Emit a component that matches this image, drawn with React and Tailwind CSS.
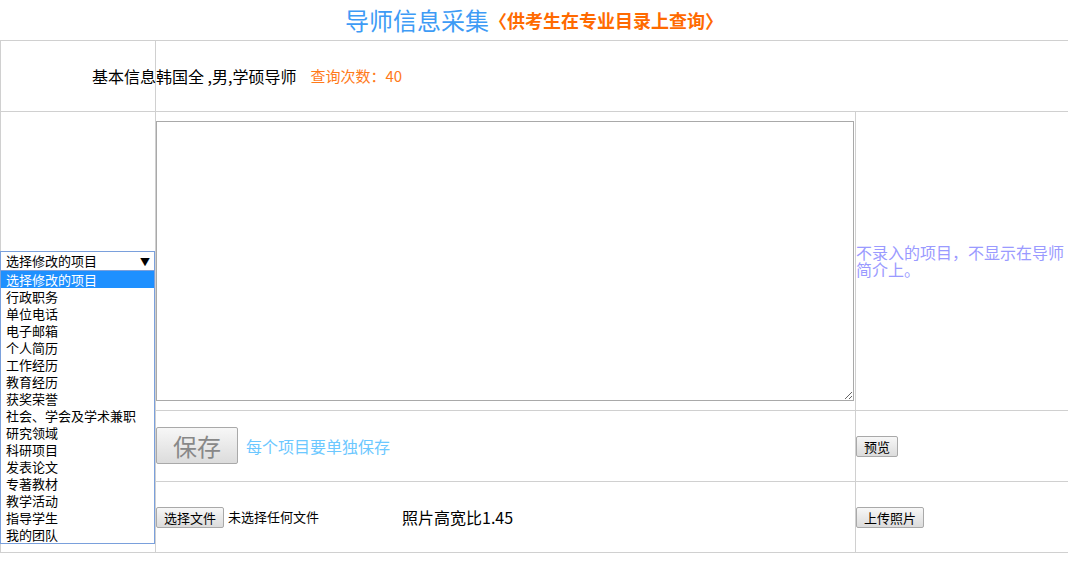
const items = [
  '选择修改的项目',
  '行政职务',
  '单位电话',
  '电子邮箱',
  '个人简历',
  '工作经历',
  '教育经历',
  '获奖荣誉',
  '社会、学会及学术兼职',
  '研究领域',
  '科研项目',
  '发表论文',
  '专著教材',
  '教学活动',
  '指导学生',
  '我的团队',
];

const font = { fontFamily: '"Noto Sans CJK SC", "Liberation Sans", sans-serif' };

function Btn({ children, className = '' }) {
  return (
    <button
      className={`border border-[#a9a9a9] rounded-[2px] bg-gradient-to-b from-[#f7f7f7] to-[#dcdcdc] text-black leading-none ${className}`}
    >
      {children}
    </button>
  );
}

export default function App() {
  return (
    <div className="w-[1068px] h-[574px] bg-white overflow-hidden" style={font}>
      <div className="h-10 flex items-center justify-center">
        <span className="text-[24px] text-[#3d9bf5] leading-none">导师信息采集</span>
        <span className="text-[18px] font-bold text-[#ff6a00] leading-none">〈供考生在专业目录上查询〉</span>
      </div>

      <div className="grid grid-cols-[155px_700px_1fr] border-t border-l border-[#d0d0d0] w-[1080px]">
        {/* row 1 */}
        <div className="h-[71px] border-r border-b border-[#d0d0d0] flex items-center justify-end text-[16px] text-black">
          <span className="-mr-px">基本信息</span>
        </div>
        <div className="col-span-2 h-[71px] border-b border-[#d0d0d0] flex items-center text-[16px] text-black">
          <span>韩国全 ,男,学硕导师</span>
          <span className="ml-[14px] text-[15px] text-[#ff7a1a]">查询次数：40</span>
        </div>

        {/* row 2 */}
        <div className="relative h-[299px] border-r border-b border-[#d0d0d0] flex items-center">
          <div className="relative w-[155px] -ml-px">
            <div className="h-[20px] border border-[#7aa0dc] bg-white flex items-center justify-between pl-[5px] pr-[4px] text-[13px] text-black">
              <span>选择修改的项目</span>
              <span className="text-[10px]">▼</span>
            </div>
            <div className="absolute left-0 top-[19px] w-[155px] h-[274px] border border-[#7aa0dc] bg-white z-10">
              {items.map((it, i) => (
                <div
                  key={it}
                  className={`h-[17px] pl-[5px] text-[13px] leading-[17px] ${
                    i === 0 ? 'bg-[#1e90ff] text-white' : 'text-black'
                  }`}
                >
                  {it}
                </div>
              ))}
            </div>
          </div>
        </div>
        <div className="h-[299px] border-r border-b border-[#d0d0d0] flex items-center">
          <textarea className="w-[698px] h-[280px] border border-[#a9a9a9] resize-y outline-none" />
        </div>
        <div className="h-[299px] border-b border-[#d0d0d0] flex items-center text-[16px] leading-[17px] text-[#9a9aff] w-[212px]">
          不录入的项目，不显示在导师简介上。
        </div>

        {/* row 3 */}
        <div className="h-[71px] border-r border-b border-[#d0d0d0]" />
        <div className="h-[71px] border-r border-b border-[#d0d0d0] flex items-center gap-2 pb-px">
          <Btn className="w-[82px] h-[37px] text-[24px] !text-[#888]">保存</Btn>
          <span className="text-[16px] text-[#6cc8ff]">每个项目要单独保存</span>
        </div>
        <div className="h-[71px] border-b border-[#d0d0d0] flex items-center">
          <Btn className="w-[42px] h-[21px] text-[13px]">预览</Btn>
        </div>

        {/* row 4 */}
        <div className="h-[71px] border-r border-b border-[#d0d0d0]" />
        <div className="h-[71px] border-r border-b border-[#d0d0d0] flex items-center text-[13px] text-black">
          <Btn className="w-[68px] h-[21px] text-[13px]">选择文件</Btn>
          <span className="ml-1 w-[174px]">未选择任何文件</span>
          <span className="text-[16px]">照片高宽比1.45</span>
        </div>
        <div className="h-[71px] border-b border-[#d0d0d0] flex items-center">
          <Btn className="w-[68px] h-[21px] text-[13px]">上传照片</Btn>
        </div>
      </div>
    </div>
  );
}
